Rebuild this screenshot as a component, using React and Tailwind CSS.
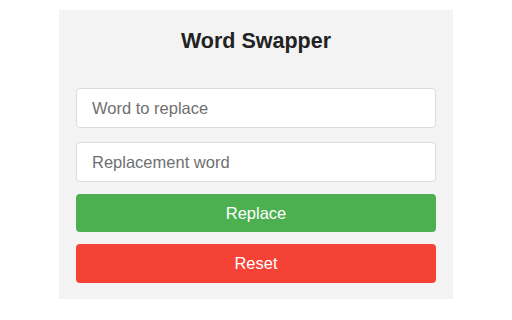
import React, { useState } from 'react';

const App = () => {
  const [word, setWord] = useState('');
  const [replacement, setReplacement] = useState('');

  const handleReset = () => {
    setWord('');
    setReplacement('');
  };

  return (
    <div className="w-[512px] h-[320px] bg-white pt-[10px] font-['Liberation_Sans',Arial,sans-serif]">
      <div className="mx-auto w-[394px] h-[289px] bg-[#f3f3f3] px-[17px] pt-[17px]">
        <h1 className="text-center text-[21.5px] leading-[28px] font-bold text-[#222]">Word Swapper</h1>

        <div className="mt-[33px] flex flex-col">
          <input
            type="text"
            value={word}
            onChange={(e) => setWord(e.target.value)}
            placeholder="Word to replace"
            className="h-[40px] w-full rounded-[4px] border border-[#dcdcdc] bg-white px-[15px] text-[16.5px] text-[#333] placeholder:text-[#6f6f6f] outline-none"
          />
          <input
            type="text"
            value={replacement}
            onChange={(e) => setReplacement(e.target.value)}
            placeholder="Replacement word"
            className="mt-[14px] h-[40px] w-full rounded-[4px] border border-[#dcdcdc] bg-white px-[15px] text-[16.5px] text-[#333] placeholder:text-[#6f6f6f] outline-none"
          />
          <button
            type="button"
            className="mt-[12px] h-[38px] w-full rounded-[4px] bg-[#4caf50] text-[16.5px] text-white"
          >
            Replace
          </button>
          <button
            type="button"
            onClick={handleReset}
            className="mt-[12px] h-[39px] w-full rounded-[4px] bg-[#f44336] text-[16.5px] text-white"
          >
            Reset
          </button>
        </div>
      </div>
    </div>
  );
};

export default App;
